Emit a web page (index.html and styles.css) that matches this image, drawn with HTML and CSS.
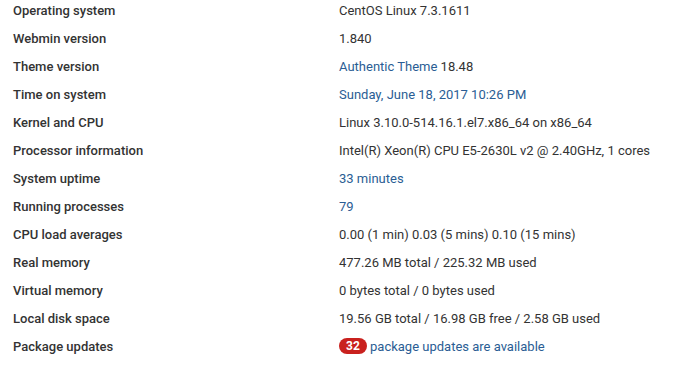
FILE: index.html
```html
<!DOCTYPE html>
<html>
<head>
<meta charset="utf-8">
<link rel="stylesheet" href="styles.css">
</head>
<body>
<div class="info">
  <div class="row"><div class="label">Operating system</div><div class="value">CentOS Linux 7.3.1611</div></div>
  <div class="row"><div class="label">Webmin version</div><div class="value">1.840</div></div>
  <div class="row"><div class="label">Theme version</div><div class="value"><a class="link">Authentic Theme</a> 18.48</div></div>
  <div class="row"><div class="label">Time on system</div><div class="value"><a class="link">Sunday, June 18, 2017 10:26 PM</a></div></div>
  <div class="row"><div class="label">Kernel and CPU</div><div class="value">Linux 3.10.0-514.16.1.el7.x86_64 on x86_64</div></div>
  <div class="row"><div class="label">Processor information</div><div class="value">Intel(R) Xeon(R) CPU E5-2630L v2 @ 2.40GHz, 1 cores</div></div>
  <div class="row"><div class="label">System uptime</div><div class="value"><a class="link">33 minutes</a></div></div>
  <div class="row"><div class="label">Running processes</div><div class="value"><a class="link">79</a></div></div>
  <div class="row"><div class="label">CPU load averages</div><div class="value">0.00 (1 min) 0.03 (5 mins) 0.10 (15 mins)</div></div>
  <div class="row"><div class="label">Real memory</div><div class="value">477.26 MB total / 225.32 MB used</div></div>
  <div class="row"><div class="label">Virtual memory</div><div class="value">0 bytes total / 0 bytes used</div></div>
  <div class="row"><div class="label">Local disk space</div><div class="value">19.56 GB total / 16.98 GB free / 2.58 GB used</div></div>
  <div class="row"><div class="label">Package updates</div><div class="value"><span class="badge">32</span> <a class="link">package updates are available</a></div></div>
</div>
</body>
</html>
```
FILE: styles.css
```css
html, body {
  margin: 0;
  padding: 0;
  background: #fff;
}
body {
  font-family: Roboto, "Liberation Sans", sans-serif;
  font-size: 13px;
  color: #333;
}
.info {
  display: flex;
  flex-direction: column;
  padding-left: 13px;
  padding-top: 1px;
}
.row {
  display: flex;
  line-height: 20px;
  padding-bottom: 8px;
}
.label {
  width: 326px;
  flex: none;
  font-weight: 500;
  color: #333;
}
.value {
  color: #333;
}
.link {
  color: #2a5d94;
  text-decoration: none;
}
.badge {
  display: inline-block;
  background: #c9211e;
  color: #fff;
  font-weight: 700;
  font-size: 12px;
  line-height: 16px;
  padding: 0 7px;
  border-radius: 8px;
  vertical-align: 1px;
}
```
